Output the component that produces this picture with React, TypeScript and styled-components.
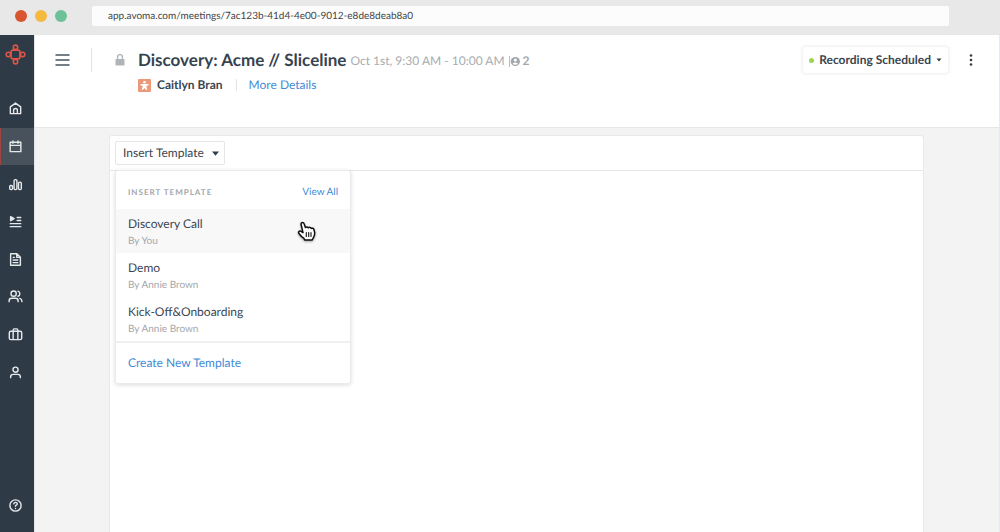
import React from "react";
import styled, { createGlobalStyle } from "styled-components";

const GlobalStyle = createGlobalStyle`
  *, *::before, *::after { box-sizing: border-box; }
  html, body, #root { height: 100%; }
  body {
    margin: 0;
    font-family: Lato, "Liberation Sans", sans-serif;
    font-size: 12px;
    line-height: 16px;
    text-rendering: geometricPrecision;
    color: #3b4550;
    background: #f3f3f3;
  }
  button, input { font: inherit; color: inherit; text-rendering: inherit; }
  button { cursor: pointer; }
  h1, h2, p, ul { margin: 0; padding: 0; }
  ul { list-style: none; }
  a { color: #3f8bd6; text-decoration: none; }
`;

const Window = styled.div`
  display: flex;
  flex-direction: column;
  min-height: 100vh;
`;

const BrowserBar = styled.div`
  display: flex;
  align-items: center;
  height: 35px;
  padding: 0 51px 3px 15px;
  background: #e8e8e8;
`;

const Lights = styled.div`
  display: flex;
  gap: 8px;
  margin-right: 25px;
`;

const Light = styled.span<{ $color: string }>`
  width: 12px;
  height: 12px;
  border-radius: 50%;
  background: ${(p) => p.$color};
`;

const Address = styled.input`
  flex: 1;
  min-width: 0;
  height: 20px;
  padding: 0 16px;
  border: 0;
  border-radius: 2px;
  background: #fcfcfc;
  font-size: 10px;
  color: #444;
`;

const Shell = styled.div`
  display: flex;
  flex: 1;
`;

const Sidebar = styled.aside`
  display: flex;
  flex-direction: column;
  width: 35px;
  flex-shrink: 0;
  background: #2f3a47;
  border-right: 1px solid #e3e5e8;
`;

const Logo = styled.a`
  display: flex;
  justify-content: center;
  padding: 9px 3px 0 0;
  height: 55px;
`;

const Nav = styled.nav`
  display: flex;
  flex-direction: column;
  height: 301px;
`;

const NavItem = styled.a<{ $active?: boolean }>`
  display: flex;
  flex: 1;
  align-items: center;
  justify-content: center;
  padding-right: 4px;
  border-left: 1px solid ${(p) => (p.$active ? "#a3433f" : "transparent")};
  background: ${(p) => (p.$active ? "#47525d" : "transparent")};
`;

const Help = styled(NavItem)`
  flex: none;
  margin-top: auto;
  height: 53px;
`;

const Glyph = styled.svg`
  display: block;
  flex-shrink: 0;
  fill: none;
  stroke: #e6e9ec;
  stroke-width: 1.5;
  stroke-linecap: round;
  stroke-linejoin: round;
`;

const Page = styled.div`
  display: flex;
  flex: 1;
  min-width: 0;
  flex-direction: column;
  border-right: 1px solid #e4eaf0;
`;

const Header = styled.header`
  display: flex;
  align-items: flex-start;
  height: 93px;
  padding: 11px 23px 0 20px;
  background: #fff;
  border-bottom: 1px solid #e6e6e6;
`;

const IconButton = styled.button`
  display: flex;
  align-items: center;
  justify-content: center;
  height: 28px;
  padding: 0;
  border: 0;
  background: none;
`;

const Divider = styled.span<{ $tall?: boolean }>`
  width: 1px;
  height: ${(p) => (p.$tall ? 24 : 12)}px;
  background: #e2e4e6;
`;

const HeaderTools = styled.div`
  display: flex;
  align-items: center;
  gap: 21px;
  height: 28px;
  margin-right: 11px;
`;

const Meeting = styled.div`
  flex: 1;
  min-width: 0;
`;

const TitleRow = styled.div`
  display: flex;
  align-items: center;
  height: 28px;
  white-space: nowrap;
`;

const Title = styled.h1`
  font-size: 17px;
  line-height: 24px;
  font-weight: 700;
  color: #36434f;
`;

const When = styled.span`
  margin: 2px 4px 0;
  color: #a7acb1;
`;

const Attendees = styled.span`
  display: flex;
  align-items: center;
  gap: 3px;
  margin-top: 2px;
  font-weight: 700;
  color: #a2a7ac;
`;

const OwnerRow = styled.div`
  display: flex;
  align-items: center;
  height: 22px;
  color: #3b4550;
  font-weight: 700;
`;

const OwnerName = styled.span`
  margin: 0 13px 0 6px;
`;

const DetailsLink = styled.a`
  margin-left: 12px;
  font-weight: 400;
`;

const Recording = styled.button`
  display: flex;
  align-items: center;
  height: 26px;
  margin: 1px 18px 0 0;
  padding: 0 6px;
  border: 0;
  border-radius: 3px;
  background: #fff;
  box-shadow: 0 0 4px rgba(0, 0, 0, 0.12);
  font-weight: 700;
  white-space: nowrap;
`;

const Dot = styled.span`
  width: 5px;
  height: 5px;
  margin-right: 5px;
  border-radius: 50%;
  background: #9bd64e;
`;

const Caret = styled.svg`
  display: block;
  margin-left: 5px;
  fill: #333d47;
`;

const Card = styled.main`
  flex: 1;
  margin: 7px 75px 0 74px;
  background: #fff;
  border: 1px solid #e9e9e9;
  border-bottom: 0;
  border-radius: 3px 3px 0 0;
`;

const Toolbar = styled.div`
  position: relative;
  padding: 5px;
  border-bottom: 1px solid #e6e6e6;
`;

const InsertButton = styled.button`
  display: flex;
  align-items: center;
  justify-content: space-between;
  width: 110px;
  height: 24px;
  padding: 0 5px 0 7px;
  border: 1px solid #e4e6e8;
  border-radius: 2px;
  background: #fff;
`;

const Menu = styled.section`
  position: absolute;
  top: 100%;
  left: 5px;
  width: 236px;
  border: 1px solid #ebebeb;
  border-radius: 3px;
  background: #fff;
  box-shadow: 0 1px 4px rgba(0, 0, 0, 0.14);
`;

const MenuHead = styled.div`
  display: flex;
  align-items: center;
  justify-content: space-between;
  height: 38px;
  padding: 3px 12px 0;
`;

const MenuTitle = styled.h2`
  font-size: 8px;
  font-weight: 700;
  letter-spacing: 1px;
  color: #a3a7ab;
`;

const SmallLink = styled.a`
  font-size: 10px;
`;

const Template = styled.button<{ $hover?: boolean }>`
  position: relative;
  display: block;
  width: 100%;
  height: 44px;
  padding: 6px 12px 4px;
  border: 0;
  background: ${(p) => (p.$hover ? "#f8f8f8" : "transparent")};
  text-align: left;
`;

const TemplateName = styled.span`
  display: block;
  line-height: 18px;
`;

const Author = styled.span`
  display: block;
  font-size: 10px;
  line-height: 16px;
  color: #a3a7ab;
`;

const MenuFoot = styled.div`
  padding: 12px;
  border-top: 2px solid #efefef;
`;

const Pointer = styled.svg`
  position: absolute;
  top: 12px;
  right: 33px;
  filter: drop-shadow(0 1px 1px rgba(0, 0, 0, 0.35));
`;

const NAV: { label: string; active?: boolean; art: React.ReactNode }[] = [
  {
    label: "Home",
    art: <path d="M2.5 6.2 8 2.2l5.5 4v7.3h-11zM6 13.3V9.2q0-1.2 2-1.2t2 1.2v4.1" />,
  },
  {
    label: "Meetings",
    active: true,
    art: <path d="M2.3 3.5h11.4v10H2.3zM2.5 6.8h11M5.3 2v2.6M10.7 2v2.6" />,
  },
  {
    label: "Analytics",
    art: (
      <>
        <rect x="1.8" y="9" width="3" height="4.5" rx="1.2" />
        <rect x="6.5" y="2.8" width="3" height="10.7" rx="1.2" />
        <rect x="11.2" y="5.5" width="3" height="8" rx="1.2" />
      </>
    ),
  },
  {
    label: "Playlists",
    art: (
      <>
        <path d="M2.8 2.8v4.4L6.5 5z" fill="#e6e9ec" />
        <path d="M9.8 3.8h3.8M9.8 7h3.8M2.4 10.3h11.2M2.4 13.5h11.2" />
      </>
    ),
  },
  {
    label: "Notes",
    art: <path d="M2.8 1.8h6.7L13.2 5.5v8.7H2.8zM9.3 2v3.7h3.7M5.5 5.7h1.4M5.5 8.5h5M5.5 11.3h5" />,
  },
  {
    label: "People",
    art: (
      <>
        <circle cx="6" cy="5" r="2.8" />
        <path d="M1.2 13.5v-.8q0-2.8 2.7-2.8h4.2q2.7 0 2.7 2.8v.8M10.6 2.3a2.8 2.8 0 0 1 0 5.4M12.6 10q2.2.5 2.2 2.8v.7" />
      </>
    ),
  },
  {
    label: "Accounts",
    art: <path d="M3 4.6h10q1.6 0 1.6 1.4v6q0 1.5-1.6 1.5H3q-1.6 0-1.6-1.5V6Q1.4 4.6 3 4.6zM5.5 13.3V3.5q0-1.5 1.2-1.5h2.6q1.2 0 1.2 1.5v9.8" />,
  },
  {
    label: "Profile",
    art: (
      <>
        <circle cx="8" cy="5" r="2.7" />
        <path d="M2.8 13.5v-.8q0-2.7 2.8-2.7h4.8q2.8 0 2.8 2.7v.8" />
      </>
    ),
  },
];

const TEMPLATES = [
  { name: "Discovery Call", author: "By You", hover: true },
  { name: "Demo", author: "By Annie Brown" },
  { name: "Kick-Off&Onboarding", author: "By Annie Brown" },
];

function HandPointer() {
  return (
    <Pointer width="20" height="21" viewBox="0 0 20 21" aria-hidden="true">
      <path
        d="M4 3C4.2 1 6.6 1 7.1 2.8L8.4 6.6C9.4 5.6 10.9 5.8 11.4 6.8 12.4 6 13.8 6.3 14.2 7.4 15.3 6.8 16.5 7.3 16.9 8.4L17.7 11.5C18 14 17 15.5 16.2 17L15.2 19H7.8L6.7 17.2C4.5 16 3 14 1.8 12.3 1 11 2.2 9.6 3.7 10.2L6 11.6z"
        fill="#fff"
        stroke="#111"
        strokeWidth="1.5"
        strokeLinejoin="round"
      />
      <path d="M9.3 11.5v4M11.7 11.5v4M14 11.5v4" stroke="#111" strokeWidth="1.1" strokeLinecap="round" />
    </Pointer>
  );
}

export default function App() {
  return (
    <Window>
      <GlobalStyle />
      <BrowserBar>
        <Lights>
          <Light $color="#d9552f" />
          <Light $color="#f5b93f" />
          <Light $color="#6cc199" />
        </Lights>
        <Address
          aria-label="Address"
          readOnly
          value="app.avoma.com/meetings/7ac123b-41d4-4e00-9012-e8de8deab8a0"
        />
      </BrowserBar>
      <Shell>
        <Sidebar>
          <Logo href="#" aria-label="Avoma">
            <Glyph width="21" height="21" viewBox="0 0 20 20">
              <g stroke="#df5547" strokeWidth="1.5">
                <rect x="5.8" y="5.8" width="8.4" height="8.4" rx="1.8" />
                <circle cx="10" cy="3.2" r="2.1" />
                <circle cx="10" cy="16.8" r="2.1" />
                <circle cx="3.2" cy="10" r="2.1" />
                <circle cx="16.8" cy="10" r="2.1" />
              </g>
            </Glyph>
          </Logo>
          <Nav aria-label="Main">
            {NAV.map((n) => (
              <NavItem key={n.label} href="#" aria-label={n.label} $active={n.active}>
                <Glyph width="15" height="15" viewBox="0 0 16 16">
                  {n.art}
                </Glyph>
              </NavItem>
            ))}
          </Nav>
          <Help href="#" aria-label="Help">
            <Glyph width="15" height="15" viewBox="0 0 16 16">
              <circle cx="8" cy="8" r="6" />
              <path d="M6.2 6.3q.2-1.6 1.9-1.6 1.8 0 1.8 1.5 0 1-1.1 1.5-.8.4-.8 1.2M8 11.2v.1" />
            </Glyph>
          </Help>
        </Sidebar>
        <Page>
          <Header>
            <HeaderTools>
              <IconButton aria-label="Menu">
                <Glyph width="15" height="12" viewBox="0 0 15 12">
                  <path d="M.5 1h14M.5 6h14M.5 11h14" stroke="#4a545e" strokeLinecap="butt" />
                </Glyph>
              </IconButton>
              <Divider $tall />
              <svg width="14" height="14" viewBox="0 0 14 14" role="img" aria-label="Private">
                <rect x="2.5" y="6" width="9" height="6.5" rx=".8" fill="#b0b4b8" />
                <path d="M4.6 6.2V4a2.4 2.4 0 0 1 4.8 0v2.2" fill="none" stroke="#b0b4b8" strokeWidth="1.4" />
              </svg>
            </HeaderTools>
            <Meeting>
              <TitleRow>
                <Title>Discovery: Acme // Sliceline</Title>
                <When>Oct 1st, 9:30 AM - 10:00 AM</When>
                <Attendees>
                  <svg width="11" height="11" viewBox="0 0 11 11" aria-hidden="true">
                    <path d="M.5 0v11" stroke="#b8bcc0" />
                    <circle cx="6.3" cy="5.5" r="4.6" fill="#a2a7ac" />
                    <circle cx="6.3" cy="4.1" r="1.5" fill="#fff" />
                    <path d="M3.5 7.9q.4-1.5 2.8-1.5t2.8 1.5q-2.8 1.6-5.6 0z" fill="#fff" />
                  </svg>
                  2
                </Attendees>
              </TitleRow>
              <OwnerRow>
                <svg width="13" height="13" viewBox="0 0 13 13" aria-hidden="true">
                  <rect width="13" height="13" rx="1" fill="#eb997b" />
                  <circle cx="6.5" cy="3.3" r="1.3" fill="#fff" />
                  <path d="M2.5 5h8v1.2L8.3 7.1l1 3.7H8L6.5 8.9 5 10.8H3.7l1-3.7-2.2-.9z" fill="#fff" />
                </svg>
                <OwnerName>Caitlyn Bran</OwnerName>
                <Divider />
                <DetailsLink href="#">More Details</DetailsLink>
              </OwnerRow>
            </Meeting>
            <Recording>
              <Dot />
              Recording Scheduled
              <Caret width="6" height="4" viewBox="0 0 6 4">
                <path d="M.5.5h5L3 3.5z" />
              </Caret>
            </Recording>
            <IconButton aria-label="More options">
              <svg width="10" height="12" viewBox="0 0 10 12" fill="#333d47" aria-hidden="true">
                <circle cx="5" cy="1.5" r="1.3" />
                <circle cx="5" cy="6" r="1.3" />
                <circle cx="5" cy="10.5" r="1.3" />
              </svg>
            </IconButton>
          </Header>
          <Card>
            <Toolbar>
              <InsertButton aria-expanded="true">
                Insert Template
                <Caret width="7" height="5" viewBox="0 0 7 5">
                  <path d="M0 .5h7L3.5 4.8z" />
                </Caret>
              </InsertButton>
              <Menu aria-label="Insert template">
                <MenuHead>
                  <MenuTitle>INSERT TEMPLATE</MenuTitle>
                  <SmallLink href="#">View All</SmallLink>
                </MenuHead>
                <ul>
                  {TEMPLATES.map((t) => (
                    <li key={t.name}>
                      <Template $hover={t.hover}>
                        <TemplateName>{t.name}</TemplateName>
                        <Author>{t.author}</Author>
                        {t.hover && <HandPointer />}
                      </Template>
                    </li>
                  ))}
                </ul>
                <MenuFoot>
                  <a href="#">Create New Template</a>
                </MenuFoot>
              </Menu>
            </Toolbar>
          </Card>
        </Page>
      </Shell>
    </Window>
  );
}
